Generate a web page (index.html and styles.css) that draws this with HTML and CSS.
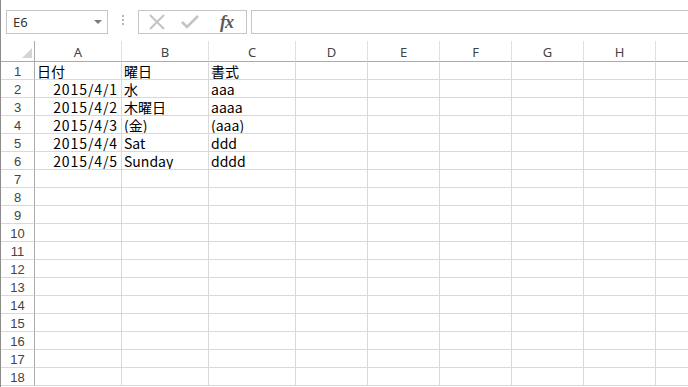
FILE: index.html
```html
<!DOCTYPE html>
<html lang="ja">
<head>
    <meta charset="UTF-8">
    <title>Book1 - Excel</title>
    <link rel="stylesheet" href="styles.css">
</head>
<body>
<div class="app">
    <div class="formula-bar">
        <div class="name-box">
            <span>E6</span>
            <span class="drop"></span>
        </div>
        <div class="grip"><i></i><i></i><i></i></div>
        <div class="fx-buttons">
            <svg class="btn" width="18" height="16" viewBox="0 0 18 16">
                <path d="M2 1 L16 15 M16 1 L2 15" stroke="#c4c4c4" stroke-width="2" fill="none"/>
            </svg>
            <svg class="btn" width="18" height="16" viewBox="0 0 18 16">
                <path d="M1 8 L6 13 L17 2" stroke="#c4c4c4" stroke-width="2.6" fill="none"/>
            </svg>
            <span class="fx">fx</span>
        </div>
        <div class="formula-input"></div>
    </div>

    <div class="sheet" id="sheet">
        <div class="row head">
            <div class="rh corner"><span class="tri"></span></div>
            <div class="c w">A</div>
            <div class="c w">B</div>
            <div class="c w">C</div>
            <div class="c">D</div>
            <div class="c">E</div>
            <div class="c">F</div>
            <div class="c">G</div>
            <div class="c">H</div>
            <div class="c last"></div>
        </div>
        <div class="row">
            <div class="rh">1</div>
            <div class="c w">日付</div>
            <div class="c w">曜日</div>
            <div class="c w">書式</div>
            <div class="c"></div><div class="c"></div><div class="c"></div><div class="c"></div><div class="c"></div><div class="c last"></div>
        </div>
        <div class="row">
            <div class="rh">2</div>
            <div class="c w num">2015/4/1</div>
            <div class="c w">水</div>
            <div class="c w">aaa</div>
            <div class="c"></div><div class="c"></div><div class="c"></div><div class="c"></div><div class="c"></div><div class="c last"></div>
        </div>
        <div class="row">
            <div class="rh">3</div>
            <div class="c w num">2015/4/2</div>
            <div class="c w">木曜日</div>
            <div class="c w">aaaa</div>
            <div class="c"></div><div class="c"></div><div class="c"></div><div class="c"></div><div class="c"></div><div class="c last"></div>
        </div>
        <div class="row">
            <div class="rh">4</div>
            <div class="c w num">2015/4/3</div>
            <div class="c w">(金)</div>
            <div class="c w">(aaa)</div>
            <div class="c"></div><div class="c"></div><div class="c"></div><div class="c"></div><div class="c"></div><div class="c last"></div>
        </div>
        <div class="row">
            <div class="rh">5</div>
            <div class="c w num">2015/4/4</div>
            <div class="c w">Sat</div>
            <div class="c w">ddd</div>
            <div class="c"></div><div class="c"></div><div class="c"></div><div class="c"></div><div class="c"></div><div class="c last"></div>
        </div>
        <div class="row">
            <div class="rh">6</div>
            <div class="c w num">2015/4/5</div>
            <div class="c w">Sunday</div>
            <div class="c w">dddd</div>
            <div class="c"></div><div class="c"></div><div class="c"></div><div class="c"></div><div class="c"></div><div class="c last"></div>
        </div>
    </div>
</div>

<script>
    // 空の行 7〜18
    const sheet = document.getElementById("sheet");
    for (let r = 7; r <= 18; r++) {
        let html = `<div class="rh">${r}</div>`;
        html += `<div class="c w"></div>`.repeat(3);
        html += `<div class="c"></div>`.repeat(5);
        html += `<div class="c last"></div>`;
        const row = document.createElement("div");
        row.className = "row";
        row.innerHTML = html;
        sheet.appendChild(row);
    }
</script>
</body>
</html>
```

FILE: styles.css
```css
body {
    margin: 0;
    background: #fff;
    font-family: "Noto Sans CJK JP", sans-serif;
    overflow: hidden;
}
.app {
    border-left: 1px solid #8c8c8c;
    height: 387px;
    box-sizing: border-box;
    overflow: hidden;
}

/* 数式バー */
.formula-bar {
    height: 41px;
    box-sizing: border-box;
    padding: 10px 0 0 5px;
    display: flex;
    align-items: flex-start;
}
.name-box {
    width: 102px;
    height: 24px;
    box-sizing: border-box;
    border: 1px solid #c6c6c6;
    display: flex;
    align-items: center;
    justify-content: space-between;
    padding: 0 5px 0 6px;
    font-family: "Noto Sans", sans-serif;
    font-size: 13px;
    color: #333;
}
.drop {
    width: 0;
    height: 0;
    border-left: 4px solid transparent;
    border-right: 4px solid transparent;
    border-top: 4px solid #7a7a7a;
}
.grip {
    margin: 5px 0 0 14px;
    width: 2px;
    display: flex;
    flex-direction: column;
    gap: 2px;
}
.grip i {
    display: block;
    width: 2px;
    height: 2px;
    background: #b5b5b5;
}
.fx-buttons {
    margin-left: 14px;
    width: 109px;
    height: 24px;
    box-sizing: border-box;
    border: 1px solid #c6c6c6;
    display: flex;
    align-items: center;
    padding-left: 9px;
    gap: 15px;
}
.fx {
    font-family: "Liberation Serif", serif;
    font-style: italic;
    font-weight: bold;
    font-size: 18px;
    color: #5a5a5a;
    margin-left: 6px;
    letter-spacing: -1px;
}
.formula-input {
    margin-left: 4px;
    flex: 1;
    height: 24px;
    box-sizing: border-box;
    border: 1px solid #c6c6c6;
    border-right: none;
}

/* シート */
.row {
    display: flex;
    height: 18px;
}
.rh, .c {
    box-sizing: border-box;
    height: 100%;
    border-bottom: 1px solid #d9d9d9;
    flex-shrink: 0;
    white-space: nowrap;
    overflow: hidden;
}
.rh {
    width: 34px;
    border-right: 1px solid #ababab;
    text-align: center;
    font-family: "Liberation Sans", sans-serif;
    font-size: 13px;
    line-height: 19px;
    color: #444;
}
.c {
    width: 72px;
    border-right: 1px solid #d9d9d9;
    padding: 0 2px;
    font-size: 14px;
    line-height: 18px;
    color: #000;
}
.c.w {
    width: 87px;
}
.c.last {
    width: 60px;
}
.num {
    text-align: right;
    padding-right: 3px;
    letter-spacing: 0.9px;
}

.row.head {
    height: 21px;
}
.head .rh, .head .c {
    border-bottom: 1px solid #ababab;
    font-family: "Noto Sans", sans-serif;
    font-size: 13px;
    color: #444;
    text-align: center;
    line-height: 22px;
}
.head .c {
    border-right-color: #e0e0e0;
}
.corner {
    position: relative;
}
.tri {
    position: absolute;
    right: 2px;
    bottom: 3px;
    width: 0;
    height: 0;
    border-left: 10px solid transparent;
    border-bottom: 10px solid #d4d4d4;
}
```
